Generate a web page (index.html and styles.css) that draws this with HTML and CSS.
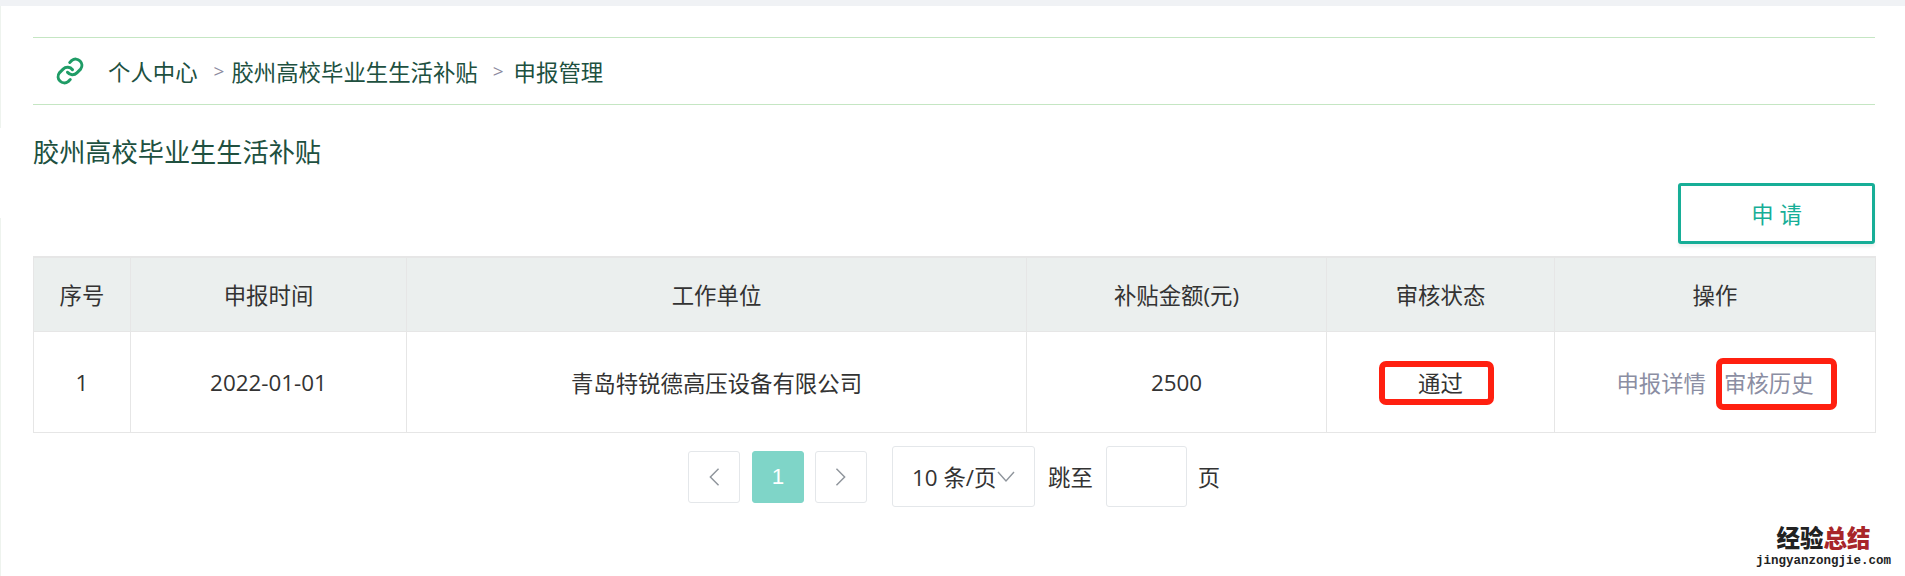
FILE: index.html
```html
<!DOCTYPE html>
<html lang="zh-CN">
<head>
    <meta charset="UTF-8">
    <title>申报管理</title>
    <link rel="stylesheet" href="styles.css">
</head>
<body>
    <div class="top-bar"></div>
    <div class="page">
        <div class="breadcrumb">
            <svg class="link-icon" viewBox="0 0 24 24" fill="none" stroke="#1f9c66" stroke-width="2.4" stroke-linecap="round" stroke-linejoin="round">
                <path d="M10 13a5 5 0 0 0 7.5.5l3-3a5 5 0 0 0-7-7l-1.7 1.7"/>
                <path d="M14 11a5 5 0 0 0-7.5-.5l-3 3a5 5 0 0 0 7 7l1.7-1.7"/>
            </svg>
            <span class="crumb-home">个人中心</span>
            <span class="crumb-sep">&gt;</span>
            <span>胶州高校毕业生生活补贴</span>
            <span class="crumb-sep crumb-sep-wide">&gt;</span>
            <span>申报管理</span>
        </div>
        <h2 class="page-title">胶州高校毕业生生活补贴</h2>
        <div class="toolbar">
            <button class="apply-btn">申 请</button>
        </div>
        <table class="result-table">
            <colgroup>
                <col class="col-no">
                <col class="col-date">
                <col class="col-unit">
                <col class="col-money">
                <col class="col-state">
                <col class="col-action">
            </colgroup>
            <thead>
                <tr>
                    <th>序号</th>
                    <th>申报时间</th>
                    <th>工作单位</th>
                    <th>补贴金额(元)</th>
                    <th>审核状态</th>
                    <th>操作</th>
                </tr>
            </thead>
            <tbody>
                <tr>
                    <td>1</td>
                    <td>2022-01-01</td>
                    <td>青岛特锐德高压设备有限公司</td>
                    <td>2500</td>
                    <td><span class="marked marked-state">通过</span></td>
                    <td>
                        <div class="actions">
                            <a class="action-link">申报详情</a>
                            <a class="action-link marked marked-history">审核历史</a>
                        </div>
                    </td>
                </tr>
            </tbody>
        </table>
        <div class="pager">
            <span class="page-btn">
                <svg viewBox="0 0 14 22" class="arrow"><path d="M12 2 3 11l9 9"/></svg>
            </span>
            <span class="page-btn page-current">1</span>
            <span class="page-btn">
                <svg viewBox="0 0 14 22" class="arrow"><path d="m2 2 9 9-9 9"/></svg>
            </span>
            <span class="page-size">10 条/页<svg viewBox="0 0 18 12" class="caret"><path d="m1 1 8 9 8-9"/></svg></span>
            <span class="jump-label">跳至</span>
            <span class="jump-input"></span>
            <span class="jump-unit">页</span>
        </div>
    </div>
    <div class="watermark">
        <div class="wm-title">经验<span class="wm-red">总结</span></div>
        <div class="wm-url">jingyanzongjie.com</div>
    </div>
</body>
</html>
```

FILE: styles.css
```css
html, body {
    height: 100%;
}
body {
    margin: 0;
    font-family: "Open Sans", "Noto Sans CJK SC", sans-serif;
    font-size: 22.4px;
    color: #333;
    background: #fff;
    overflow: hidden;
    position: relative;
}
.top-bar {
    height: 6px;
    background: #f0f2f5;
}
.page {
    height: 570px;
    box-sizing: border-box;
    padding: 31px 30px 0 33px;
    background:
        linear-gradient(#eef3ee, #eef3ee) 0 0 / 1px 122px no-repeat,
        linear-gradient(#eef3ee, #eef3ee) 0 212px / 1px 400px no-repeat;
}
.breadcrumb {
    display: flex;
    align-items: center;
    height: 66px;
    border-top: 1px solid #c5e6c3;
    border-bottom: 1px solid #c5e6c3;
    color: #20503f;
}
.link-icon {
    width: 30px;
    height: 30px;
    margin-left: 22px;
}
.crumb-home {
    margin-left: 23px;
}
.crumb-sep {
    margin: 0 7px 0 16px;
    font-size: 19px;
    color: #8b8a9e;
}
.crumb-sep-wide {
    margin-left: 15px;
    margin-right: 10px;
}
.page-title {
    margin: 27px 0 0;
    font-size: 26.2px;
    font-weight: 400;
    line-height: 40px;
    color: #20503f;
}
.toolbar {
    display: flex;
    justify-content: flex-end;
    margin-top: 11px;
}
.apply-btn {
    width: 197px;
    height: 61px;
    border: 3px solid #17ae97;
    border-radius: 3px;
    background: #fff;
    color: #17ae97;
    font: inherit;
    box-shadow: 0 3px 3px #f0f2f1;
}
.result-table {
    width: 1842px;
    margin-top: 12px;
    border-collapse: collapse;
    table-layout: fixed;
    border: 1px solid #e6e6e6;
    border-top-width: 2px;
}
.col-no { width: 97px; }
.col-date { width: 276px; }
.col-unit { width: 620px; }
.col-money { width: 300px; }
.col-state { width: 228px; }
.col-action { width: 321px; }
.result-table th, .result-table td {
    border: 1px solid #e6e6e6;
    text-align: center;
    font-size: 22.4px;
    font-weight: 400;
    padding: 0;
}
.result-table th {
    height: 73px;
    background: #ebefee;
}
.result-table td {
    height: 100px;
}
.actions {
    display: flex;
    justify-content: center;
    gap: 18px;
}
.action-link {
    color: #8b8ea3;
}
.marked {
    position: relative;
    display: inline-block;
}
/* hand drawn highlight boxes */
.marked::after {
    content: "";
    position: absolute;
    border: 6px solid #ff2010;
    border-radius: 7px;
}
.marked-state::after {
    top: -5px;
    bottom: -6px;
    left: -39px;
    right: -31px;
}
.marked-history::after {
    top: -8px;
    bottom: -11px;
    left: -8px;
    right: -23px;
}
.pager {
    display: flex;
    align-items: center;
    margin: 13px 0 0 655px;
}
.page-btn {
    display: flex;
    align-items: center;
    justify-content: center;
    box-sizing: border-box;
    width: 52px;
    height: 52px;
    margin-right: 12px;
    border: 1px solid #e4e7ea;
    border-radius: 3px;
}
.page-current {
    margin-right: 11px;
    background: #7fd5c8;
    border-color: #7fd5c8;
    color: #fff;
    font-family: "Liberation Sans", sans-serif;
}
.arrow {
    width: 14px;
    height: 20px;
    fill: none;
    stroke: #8f959c;
    stroke-width: 1.6;
}
.page-size {
    display: flex;
    align-items: center;
    box-sizing: border-box;
    width: 143px;
    height: 61px;
    margin-left: 13px;
    padding-left: 19px;
    border: 1px solid #e4e7ea;
    border-radius: 3px;
    white-space: nowrap;
}
.caret {
    width: 18px;
    height: 12px;
    margin-left: 1px;
    fill: none;
    stroke: #8f959c;
    stroke-width: 1.4;
}
.jump-label {
    margin-left: 13px;
}
.jump-input {
    box-sizing: border-box;
    width: 81px;
    height: 61px;
    margin-left: 13px;
    border: 1px solid #e4e7ea;
    border-radius: 3px;
}
.jump-unit {
    margin-left: 11px;
}
.watermark {
    position: absolute;
    right: 14px;
    bottom: 6px;
    text-align: center;
    color: #222;
}
.wm-title {
    font-family: "Noto Sans CJK SC", sans-serif;
    font-size: 23.5px;
    line-height: 24px;
    font-weight: 900;
}
.wm-red {
    color: #a8262a;
}
.wm-url {
    margin-top: 4px;
    font-family: "Liberation Mono", monospace;
    font-size: 12.5px;
    font-weight: 700;
    line-height: 17px;
}
```
